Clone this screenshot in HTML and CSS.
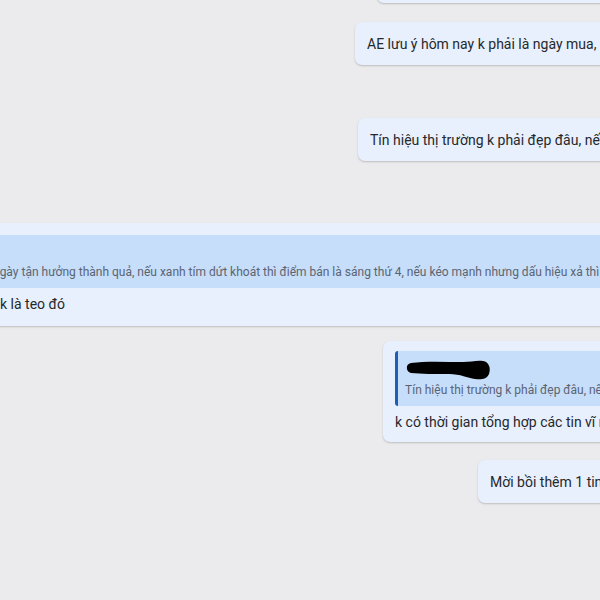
FILE: index.html
```html
<!DOCTYPE html>
<html lang="vi">
<head>
  <meta charset="UTF-8" />
  <meta name="viewport" content="width=device-width, initial-scale=1.0" />
  <title>Chat</title>
  <link rel="stylesheet" href="styles.css">
</head>
<body>
  <div class="chat">

    <div class="bubble out msg-top">
      <p class="text">&nbsp;</p>
    </div>

    <div class="bubble out msg-notice">
      <p class="text">AE lưu ý hôm nay k phải là ngày mua, nên</p>
    </div>

    <div class="bubble out msg-signal">
      <p class="text">Tín hiệu thị trường k phải đẹp đâu, nếu</p>
    </div>

    <div class="bubble wide">
      <div class="quote quote-clipped">
        <div class="quote-author"></div>
        <p class="quote-text">ngày tận hưởng thành quả, nếu xanh tím dứt khoát thì điểm bán là sáng thứ 4, nếu kéo mạnh nhưng dấu hiệu xả thì</p>
      </div>
      <p class="text">k là teo đó</p>
    </div>

    <div class="bubble out msg-reply">
      <div class="quote">
        <div class="quote-author">
          <!-- redacted name -->
          <svg class="redact" width="86" height="22" viewBox="0 0 86 22">
            <path d="M6 4 C20 2, 40 3, 58 3 C66 3, 72 1, 78 2 C84 3, 86 9, 84 15 C82 20, 76 21, 70 20 C62 19, 56 15, 44 15 C30 15, 16 15, 6 14 C1 13, 0 5, 6 4 Z" fill="#000" />
          </svg>
        </div>
        <p class="quote-text">Tín hiệu thị trường k phải đẹp đâu, nếu</p>
      </div>
      <p class="text">k có thời gian tổng hợp các tin vĩ mô</p>
    </div>

    <div class="bubble out msg-more">
      <p class="text">Mời bồi thêm 1 tin</p>
    </div>

  </div>
</body>
</html>
```

FILE: styles.css
```css
* {
  box-sizing: border-box;
}

body {
  margin: 0;
  background-color: #ebebed;
  font-family: Roboto, 'Noto Sans', sans-serif;
  color: #26282c;
}

.chat {
  width: 600px;
  height: 600px;
  overflow: hidden;
  display: flex;
  flex-direction: column;
  justify-content: flex-end;
  padding-bottom: 97px;
}

p {
  margin: 0;
}

.bubble {
  background-color: #e7f0fc;
  border-radius: 7px;
  padding: 12px 12px 11px 12px;
  box-shadow: 0 1px 2px rgba(0, 0, 0, 0.2);
  white-space: nowrap;
  flex-shrink: 0;
}

.bubble.out {
  margin-right: -40px;
}

.text {
  font-size: 14px;
  line-height: 20px;
}

/* outgoing positions */
.msg-top {
  margin-left: 377px;
}

.msg-notice {
  margin-left: 355px;
  margin-top: 19px;
}

.msg-signal {
  margin-left: 358px;
  margin-top: 53px;
}

.msg-reply {
  margin-left: 383px;
  margin-top: 15px;
  padding-top: 10px;
  padding-bottom: 10px;
}

.msg-more {
  margin-left: 478px;
  margin-top: 18px;
}

/* wide incoming message */
.bubble.wide {
  margin-left: -12px;
  margin-right: -40px;
  margin-top: 62px;
  padding-top: 12px;
  padding-bottom: 12px;
}

.quote {
  background-color: #c6defa;
  border-left: 3px solid #1c5fb5;
  border-radius: 3px;
  padding: 6px 8px 7px 7px;
  margin-bottom: 6px;
}

.quote-clipped {
  margin-left: -17px;
  padding-left: 7px;
}

.quote-author {
  height: 22px;
}

.redact {
  display: block;
  margin-left: 0;
  margin-top: 2px;
}

.quote-text {
  font-size: 12px;
  line-height: 18px;
  color: #5b6472;
}
```
